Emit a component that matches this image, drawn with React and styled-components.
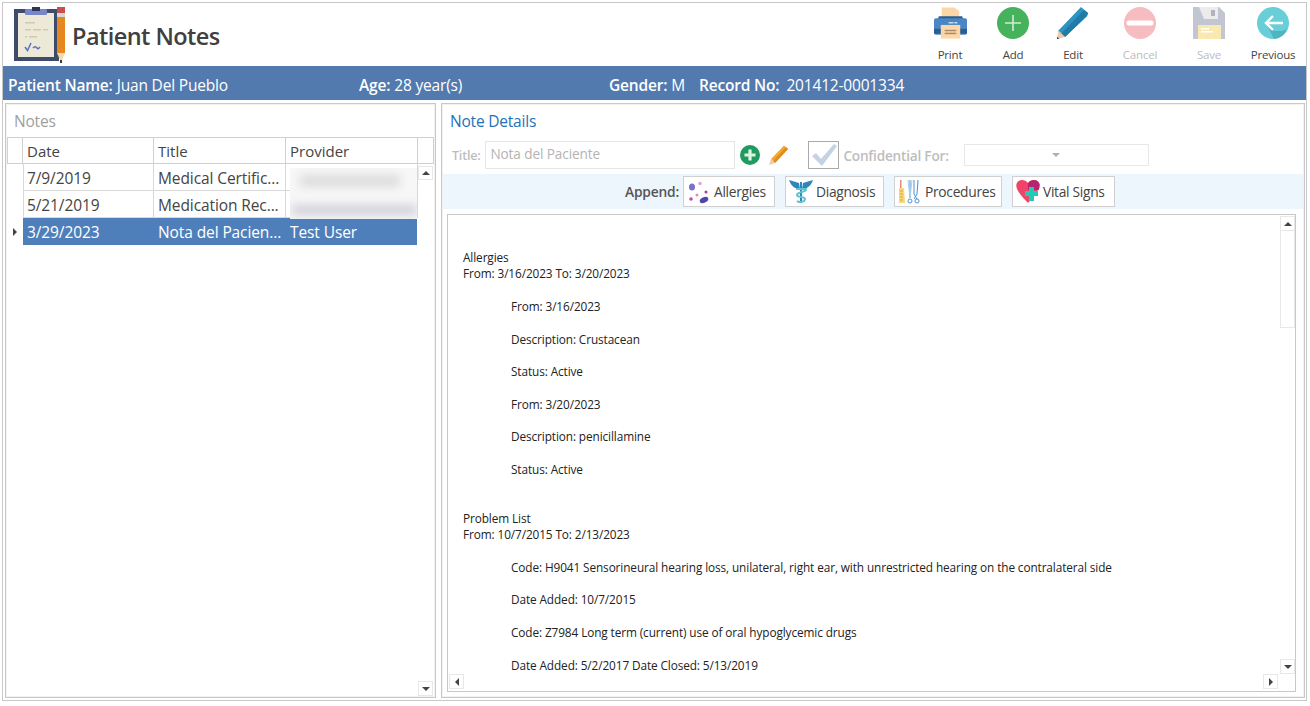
import React from "react";
import styled, { createGlobalStyle } from "styled-components";

const Global = createGlobalStyle`
  html, body { margin: 0; padding: 0; background: #fff; }
  body { font-family: "Open Sans", "Noto Sans", "Liberation Sans", sans-serif; color: #444; overflow: hidden; }
  * { box-sizing: border-box; }
`;

const Frame = styled.div`
  margin: 2px 0 0 2px; width: 1305px; height: 699px;
  border: 1px solid #c8c8c8; display: flex; flex-direction: column; background: #fff;
`;
const Header = styled.header`
  height: 63px; flex: none; display: flex; align-items: flex-start; justify-content: space-between; padding: 4px 2px 0 11px;
`;
const Brand = styled.div`display: flex; align-items: center; gap: 6px;`;
const PageTitle = styled.h1`
  margin: 1px 0 0; font-size: 23.5px; font-weight: 600; color: #404040; letter-spacing: -0.55px; line-height: 32px;
`;
const Toolbar = styled.div`display: flex;`;
const ToolButton = styled.div`
  width: ${p => p.$w}px; display: flex; flex-direction: column; align-items: center; gap: 8px;
  font-size: 11.5px; line-height: 16px; letter-spacing: -0.2px; color: ${p => (p.$off ? "#bdbdbd" : "#444")};
  svg { display: block; }
`;
const PatientBar = styled.div`
  height: 34px; flex: none; background: #527aae; color: #fff; display: flex; align-items: center;
  font-size: 15.5px; padding: 4px 0 0 5px; letter-spacing: -0.18px;
`;
const Field = styled.span`width: ${p => p.$w}px; flex: none; white-space: nowrap; b { font-weight: 600; margin-right: ${p => p.$m || 4}px; }`;
const Content = styled.main`flex: 1; min-height: 0; display: flex; gap: 5px; padding: 3px 1px 2px 2px;`;
const Panel = styled.section`
  border: 1px solid #c8c8c8; box-shadow: inset 0 0 0 1px #f2f2f2; display: flex; flex-direction: column; min-height: 0;
  ${p => (p.$w ? `width: ${p.$w}px; flex: none;` : "flex: 1; min-width: 0;")}
`;
const PanelTitle = styled.h2`
  margin: 0; font-weight: 400; font-size: 15.5px; line-height: 20px; letter-spacing: -0.2px; color: ${p => p.$c};
`;
const NotesHead = styled.div`height: 33px; flex: none; padding: 7px 0 0 8px;`;
const TableWrap = styled.div`position: relative; flex: 1; min-height: 0; margin: 0 1px 1px 1px;`;
const GridTable = styled.div`display: grid; grid-template-columns: 16px 131px 132px 132px 16px; grid-auto-rows: 27px;`;
const HeadCell = styled.div`
  border: 1px solid #d0d0d0; border-left: ${p => (p.$first ? "1px solid #d0d0d0" : "0")};
  font-size: 15px; line-height: 26px; padding-left: 4px; color: #444; white-space: nowrap;
`;
const Gutter = styled.div`
  display: flex; align-items: center; justify-content: center;
`;
const Cell = styled.div`
  font-size: 15.5px; line-height: 29px; padding-left: ${p => (p.$left && !p.$sel ? 3 : 4)}px; white-space: nowrap; overflow: hidden; letter-spacing: -0.1px;
  margin-right: ${p => (p.$end && p.$sel ? 1 : 0)}px;
  border-right: ${p => (p.$sel ? "0" : "1px solid #d8d8d8")};
  border-bottom: ${p => (p.$sel ? "0" : "1px solid #d8d8d8")};
  border-left: ${p => (p.$left && !p.$sel ? "1px solid #d8d8d8" : "0")};
  background: ${p => (p.$sel ? "#4f7fbb" : "#fff")}; color: ${p => (p.$sel ? "#fff" : "#444")};
`;
const BlurBox = styled.div`
  position: absolute; left: 283px; top: 31px; width: 127px; height: 51px; background: #f7f7f7; overflow: hidden;
`;
const BlurInk = styled.div`
  margin: ${p => p.$m}; height: ${p => p.$h}px; width: ${p => p.$w}px; background: ${p => p.$c}; filter: blur(5px);
`;
const TableScroll = styled.div`
  position: absolute; right: 0; top: 29px; bottom: 0; width: 16px; display: flex; flex-direction: column; justify-content: space-between;
`;
const SBtn = styled.div`
  width: 15px; height: ${p => p.$h || 15}px; border: 1px solid #e8e8e8; background: #fff;
  display: flex; align-items: center; justify-content: center; flex: none;
`;
const Arrow = styled.i`
  display: block; width: 0; height: 0;
  ${p => p.$d === "up" && "border-left: 4px solid transparent; border-right: 4px solid transparent; border-bottom: 4px solid #444;"}
  ${p => p.$d === "down" && "border-left: 4px solid transparent; border-right: 4px solid transparent; border-top: 4px solid #444;"}
  ${p => p.$d === "left" && "border-top: 4px solid transparent; border-bottom: 4px solid transparent; border-right: 4px solid #444;"}
  ${p => p.$d === "right" && "border-top: 4px solid transparent; border-bottom: 4px solid transparent; border-left: 4px solid #444;"}
`;
const DetailsHead = styled.div`height: 37px; flex: none; padding: 7px 0 0 8px;`;
const FormRow = styled.div`display: flex; align-items: center; height: 28px; flex: none; padding-left: 10px;`;
const Lab = styled.label`
  font-size: ${p => p.$s}px; font-weight: 600; color: #bdbdbd; letter-spacing: -0.2px; white-space: nowrap; margin-top: 1px;
`;
const TitleInput = styled.div`
  width: 250px; height: 28px; border: 1px solid #e6e6e6; margin-left: 5px; font-size: 13.6px; line-height: 24px; padding-left: 4px;
  color: #b4b4b4; letter-spacing: -0.1px;
`;
const IconSlot = styled.span`display: flex; margin-left: ${p => p.$m}px; svg { display: block; }`;
const CheckBox = styled.div`
  width: 31px; height: 28px; border: 1px solid #aaa; margin-left: 19px; margin-right: 4px; display: flex; align-items: center; justify-content: center;
`;
const Select = styled.div`
  width: 185px; height: 22px; border: 1px solid #e8e8e8; margin-left: 15px; display: flex; align-items: center; justify-content: center;
  i { border-top-color: #b0b0b0; }
`;
const AppendBar = styled.div`
  height: 35px; flex: none; margin: 5px 1px 0; background: #eef6fd; display: flex; align-items: center; gap: 10px; padding-left: 181px;
`;
const AppendLabel = styled.span`font-size: 13.8px; font-weight: 600; color: #555; letter-spacing: -0.2px; margin-right: -6px; margin-left: 1px;`;
const AppendBtn = styled.div`
  width: ${p => p.$w}px; height: 31px; background: #fff; border: 1px solid #d0d0d0; display: flex; align-items: center; gap: 3px;
  padding-left: 3px; font-size: 13.8px; color: #444; letter-spacing: -0.3px; white-space: nowrap; svg { display: block; flex: none; }
`;
const NoteBox = styled.div`
  flex: 1; min-height: 0; margin: 5px 8px 5px 5px; border: 1px solid #c8c8c8;
  display: grid; grid-template-columns: 1fr 17px; grid-template-rows: 1fr 17px;
`;
const NoteText = styled.div`
  overflow: hidden; padding: 34.1px 0 0 15px; font-size: 11.8px; line-height: 16.3px; color: #222; letter-spacing: -0.1px; white-space: nowrap;
`;
const Line = styled.div`
  padding-left: ${p => (p.$i ? 48 : 0)}px; margin-bottom: ${p => p.$gap || 0}px;
`;
const VScroll = styled.div`display: flex; flex-direction: column; padding: 1px 0 0 2px; justify-content: space-between;`;
const VTrack = styled.div`display: flex; flex-direction: column;`;
const Thumb = styled.div`width: 15px; height: 97px; border: 1px solid #e8e8e8; border-top: 0;`;
const HScroll = styled.div`display: flex; justify-content: space-between; padding: 0 0 1px 1px;`;

const Logo = () => (
  <svg width="52" height="56" viewBox="0 0 52 56">
    <rect x="0" y="2" width="45" height="52" fill="#3f4b6b" />
    <rect x="4" y="6" width="36" height="44" fill="#ece9d8" />
    <rect x="11" y="2" width="22" height="6" rx="1" fill="#7686c8" />
    <rect x="18" y="0" width="8" height="4" fill="#2f3752" />
    <g fill="#cfcca8">
      <rect x="11" y="15" width="10" height="1.5" />
      <rect x="11" y="22" width="6" height="1.5" /><rect x="19" y="22" width="8" height="1.5" /><rect x="29" y="22" width="5" height="1.5" />
      <rect x="11" y="29" width="2" height="1.5" /><rect x="15" y="29" width="8" height="1.5" />
    </g>
    <path d="M11 40l2.5 3.5L17 36M19 41c1.500-2 3-1.500 4 0s2 0 3-1" fill="none" stroke="#5a72c4" strokeWidth="1.500" />
    <rect x="43" y="0" width="8" height="6" fill="#c8504a" />
    <rect x="43" y="6" width="8" height="4" fill="#d6d6d6" />
    <rect x="43" y="10" width="8" height="36" fill="#e5881f" />
    <path d="M43 46h8l-3 7h-2z" fill="#efd9ae" />
    <rect x="46" y="53" width="2" height="3" fill="#3a3a3a" />
  </svg>
);
const PrintIcon = () => (
  <svg width="33" height="32" viewBox="0 0 34 32">
    <path d="M8 0h13l5 4v8H8z" fill="#fdd6a8" />
    <path d="M5 9h24l1 3H4z" fill="#2c5d8f" />
    <path d="M2 11h30a2 2 0 0 1 2 2v13a2 2 0 0 1-2 2H2a2 2 0 0 1-2-2V13a2 2 0 0 1 2-2z" fill="#4a86c5" />
    <rect x="0" y="22" width="34" height="5" fill="#2c5d8f" />
    <rect x="15" y="15" width="5" height="1.500" fill="#cfe0f2" /><rect x="21" y="15" width="3" height="1.500" fill="#cfe0f2" />
    <rect x="7" y="18" width="20" height="14" fill="#fdd6a8" />
    <rect x="11" y="23" width="12" height="1.500" fill="#a98a6c" /><rect x="11" y="26" width="12" height="1.500" fill="#a98a6c" />
  </svg>
);
const AddIcon = () => (
  <svg width="32" height="32" viewBox="0 0 32 32">
    <circle cx="16" cy="16" r="16" fill="#46b35c" />
    <path d="M16 8v16M8 16h16" stroke="#cfeed5" strokeWidth="1.600" />
  </svg>
);
const EditIcon = () => (
  <svg width="32" height="32" viewBox="0 0 32 32">
    <path d="M24 0l7 6-1 3L8 30 1 24z" fill="#2e93bf" />
    <path d="M27 3l4 3-1 3L8 30l-4-3z" fill="#1f7ca6" />
    <path d="M1.500 23.500L8 30l-8 2z" fill="#f3c7a8" />
    <path d="M0 29.500L2.500 32 0 32z" fill="#2c5d8f" />
  </svg>
);
const CancelIcon = () => (
  <svg width="32" height="32" viewBox="0 0 32 32">
    <circle cx="16" cy="16" r="16" fill="#f7bcbf" />
    <rect x="2.500" y="13.500" width="27" height="5" rx="2.500" fill="#fff" />
  </svg>
);
const SaveIcon = () => (
  <svg width="32" height="32" viewBox="0 0 32 32">
    <path d="M0 0h26l6 6v26H0z" fill="#c2c5d2" />
    <path d="M6 0h19v12H11z" fill="#ececec" />
    <rect x="18" y="3" width="4" height="6" fill="#b0b3c0" />
    <rect x="5" y="18" width="23" height="14" fill="#f9e8b0" />
    <rect x="8" y="21" width="8" height="1.500" fill="#fff" /><rect x="8" y="24" width="12" height="1.500" fill="#fff" />
  </svg>
);
const PrevIcon = () => (
  <svg width="32" height="32" viewBox="0 0 32 32">
    <circle cx="16" cy="16" r="16" fill="#68cfd8" />
    <path d="M9 16l8 8 8 0 5 -2A16 16 0 0 1 17 32 z" fill="#4fb4c0" />
    <path d="M16 9l-7 7 7 7M9 16h17" fill="none" stroke="#fff" strokeWidth="2.400" />
  </svg>
);
const SmallAdd = () => (
  <svg width="20" height="20" viewBox="0 0 20 20">
    <circle cx="10" cy="10" r="10" fill="#1f9b5f" />
    <path d="M10 4.500v11M4.500 10h11" stroke="#dff3e7" strokeWidth="3.200" />
  </svg>
);
const SmallPencil = () => (
  <svg width="20" height="20" viewBox="0 0 20 20">
    <path d="M15 0.500l4 3.500L6 18l-4-4z" fill="#f2a932" />
    <path d="M17 2l2 2L6 18l-2-2z" fill="#df8d1d" />
    <path d="M2 14l4 4-6 2z" fill="#f1c9a5" />
  </svg>
);
const Check = () => (
  <svg width="28" height="24" viewBox="0 0 28 24">
    <path d="M2 13l4-3 5 6L24 1l3 2-15 20z" fill="#c4d2e4" />
  </svg>
);
const AllergyIcon = () => (
  <svg width="24" height="24" viewBox="0 0 24 24">
    <ellipse cx="5" cy="7" rx="3" ry="3.500" fill="#7a72c8" />
    <circle cx="13" cy="3.500" r="1.800" fill="#e6a3d0" />
    <circle cx="19" cy="12" r="1.500" fill="#b03a86" />
    <circle cx="10" cy="15" r="1.500" fill="#e089c0" />
    <circle cx="4" cy="19" r="1.800" fill="#c2509c" />
    <ellipse cx="17" cy="20" rx="4.500" ry="2.800" transform="rotate(-25 17 20)" fill="#4f46a8" />
  </svg>
);
const DiagIcon = () => (
  <svg width="24" height="26" viewBox="0 0 24 26">
    <path d="M0 1l10 3 1 6C6 10 2 7 0 1zM24 1L14 4l-1 6c5 0 9-3 11-9z" fill="#2f86bd" />
    <rect x="11" y="3" width="2" height="20" fill="#2f86bd" />
    <path d="M7 10h10c1 3-9 3-9 6s8 1 8 4-6 4-8 2" fill="none" stroke="#5cc3cf" strokeWidth="2" />
  </svg>
);
const ProcIcon = () => (
  <svg width="24" height="26" viewBox="0 0 24 26">
    <rect x="2" y="1" width="1.500" height="8" fill="#e58a7a" />
    <path d="M1 9h5l1 15H1z" fill="#f6d77a" />
    <path d="M2 12h3M2 15h3M2 18h3M2 21h3" stroke="#d9a93a" />
    <path d="M12 1v18M16 1v14l3 5M20 1l-1 14-3 5" fill="none" stroke="#4a93cf" strokeWidth="1" />
    <path d="M10 1l2 18M14 1l-2 18" fill="none" stroke="#a4cfee" />
    <circle cx="12" cy="22" r="2" fill="none" stroke="#4a93cf" /><circle cx="19" cy="22" r="2" fill="none" stroke="#4a93cf" />
  </svg>
);
const VitalIcon = () => (
  <svg width="24" height="25" viewBox="0 0 24 25">
    <path d="M12 4C9 0 2 0 .5 5c-1.500 6 6 13 11.500 19 5-5 12-13 11.500-19C22 0 15 0 12 4z" fill="#f0436a" />
    <path d="M12 4c3-4 10-4 11.500 1 .4 2 0 4-.9 6H12z" fill="#b5246f" />
    <path d="M13 8h5v4h4v5h-4v5h-5v-5H9v-5h4z" fill="#1ecbb6" />
  </svg>
);

const rows = [
  ["7/9/2019", "Medical Certific...", ""],
  ["5/21/2019", "Medication Rec...", ""],
  ["3/29/2023", "Nota del Pacien...", "Test User"],
];
const tools = [
  ["Print", 68, <PrintIcon key="p" />],
  ["Add", 58, <AddIcon key="a" />],
  ["Edit", 62, <EditIcon key="e" />],
  ["Cancel", 72, <CancelIcon key="c" />, true],
  ["Save", 66, <SaveIcon key="s" />, true],
  ["Previous", 62, <PrevIcon key="r" />],
];
const lines = [
  ["Allergies"], ["From: 3/16/2023 To: 3/20/2023", 0, 16.3],
  ["From: 3/16/2023", 1, 16.3], ["Description: Crustacean", 1, 16.3], ["Status: Active", 1, 16.3],
  ["From: 3/20/2023", 1, 16.3], ["Description: penicillamine", 1, 16.3], ["Status: Active", 1, 32.6],
  ["Problem List"], ["From: 10/7/2015 To: 2/13/2023", 0, 16.3],
  ["Code: H9041 Sensorineural hearing loss, unilateral, right ear, with unrestricted hearing on the contralateral side", 1, 16.3],
  ["Date Added: 10/7/2015", 1, 16.3],
  ["Code: Z7984 Long term (current) use of oral hypoglycemic drugs", 1, 16.3],
  ["Date Added: 5/2/2017 Date Closed: 5/13/2019", 1, 16.3],
];

export default function App() {
  return (
    <>
      <Global />
      <Frame>
        <Header>
          <Brand>
            <Logo />
            <PageTitle>Patient Notes</PageTitle>
          </Brand>
          <Toolbar>
            {tools.map(([label, w, icon, off]) => (
              <ToolButton key={label} $w={w} $off={off}>
                {icon}
                <span>{label}</span>
              </ToolButton>
            ))}
          </Toolbar>
        </Header>
        <PatientBar>
          <Field $w={351}><b>Patient Name:</b>Juan Del Pueblo</Field>
          <Field $w={250}><b>Age:</b>28 year(s)</Field>
          <Field $w={90}><b>Gender:</b>M</Field>
          <Field $w={300} $m={7}><b>Record No:</b>201412-0001334</Field>
        </PatientBar>
        <Content>
          <Panel $w={431}>
            <NotesHead><PanelTitle $c="#a0a0a0">Notes</PanelTitle></NotesHead>
            <TableWrap>
              <GridTable>
                <HeadCell $first />
                <HeadCell>Date</HeadCell>
                <HeadCell>Title</HeadCell>
                <HeadCell>Provider</HeadCell>
                <HeadCell />
                {rows.map(([d, t, p], i) => {
                  const sel = i === 2;
                  return (
                    <React.Fragment key={d}>
                      <Gutter>{sel && <Arrow $d="right" />}</Gutter>
                      <Cell $sel={sel} $left>{d}</Cell>
                      <Cell $sel={sel}>{t}</Cell>
                      <Cell $sel={sel} $end>{p}</Cell>
                      <div />
                    </React.Fragment>
                  );
                })}
              </GridTable>
              <BlurBox>
                <BlurInk $w={100} $h={12} $c="#dcdcdc" $m="7px 0 0 10px" />
                <BlurInk $w={125} $h={10} $c="#cfd0d8" $m="18px 0 0 2px" />
              </BlurBox>
              <TableScroll>
                <SBtn $h={14}><Arrow $d="up" /></SBtn>
                <SBtn><Arrow $d="down" /></SBtn>
              </TableScroll>
            </TableWrap>
          </Panel>
          <Panel>
            <DetailsHead><PanelTitle $c="#1f72b8">Note Details</PanelTitle></DetailsHead>
            <FormRow>
              <Lab $s={12.5}>Title:</Lab>
              <TitleInput>Nota del Paciente</TitleInput>
              <IconSlot $m={5}><SmallAdd /></IconSlot>
              <IconSlot $m={9}><SmallPencil /></IconSlot>
              <CheckBox><Check /></CheckBox>
              <Lab $s={13.6}>Confidential For:</Lab>
              <Select><Arrow $d="down" /></Select>
            </FormRow>
            <AppendBar>
              <AppendLabel>Append:</AppendLabel>
              <AppendBtn $w={92}><AllergyIcon />Allergies</AppendBtn>
              <AppendBtn $w={99}><DiagIcon />Diagnosis</AppendBtn>
              <AppendBtn $w={108}><ProcIcon />Procedures</AppendBtn>
              <AppendBtn $w={103}><VitalIcon />Vital Signs</AppendBtn>
            </AppendBar>
            <NoteBox>
              <NoteText>
                {lines.map(([t, i, gap], n) => <Line key={n} $i={i} $gap={gap}>{t}</Line>)}
              </NoteText>
              <VScroll>
                <VTrack>
                  <SBtn><Arrow $d="up" /></SBtn>
                  <Thumb />
                </VTrack>
                <SBtn><Arrow $d="down" /></SBtn>
              </VScroll>
              <HScroll>
                <SBtn><Arrow $d="left" /></SBtn>
                <SBtn><Arrow $d="right" /></SBtn>
              </HScroll>
              <div />
            </NoteBox>
          </Panel>
        </Content>
      </Frame>
    </>
  );
}
